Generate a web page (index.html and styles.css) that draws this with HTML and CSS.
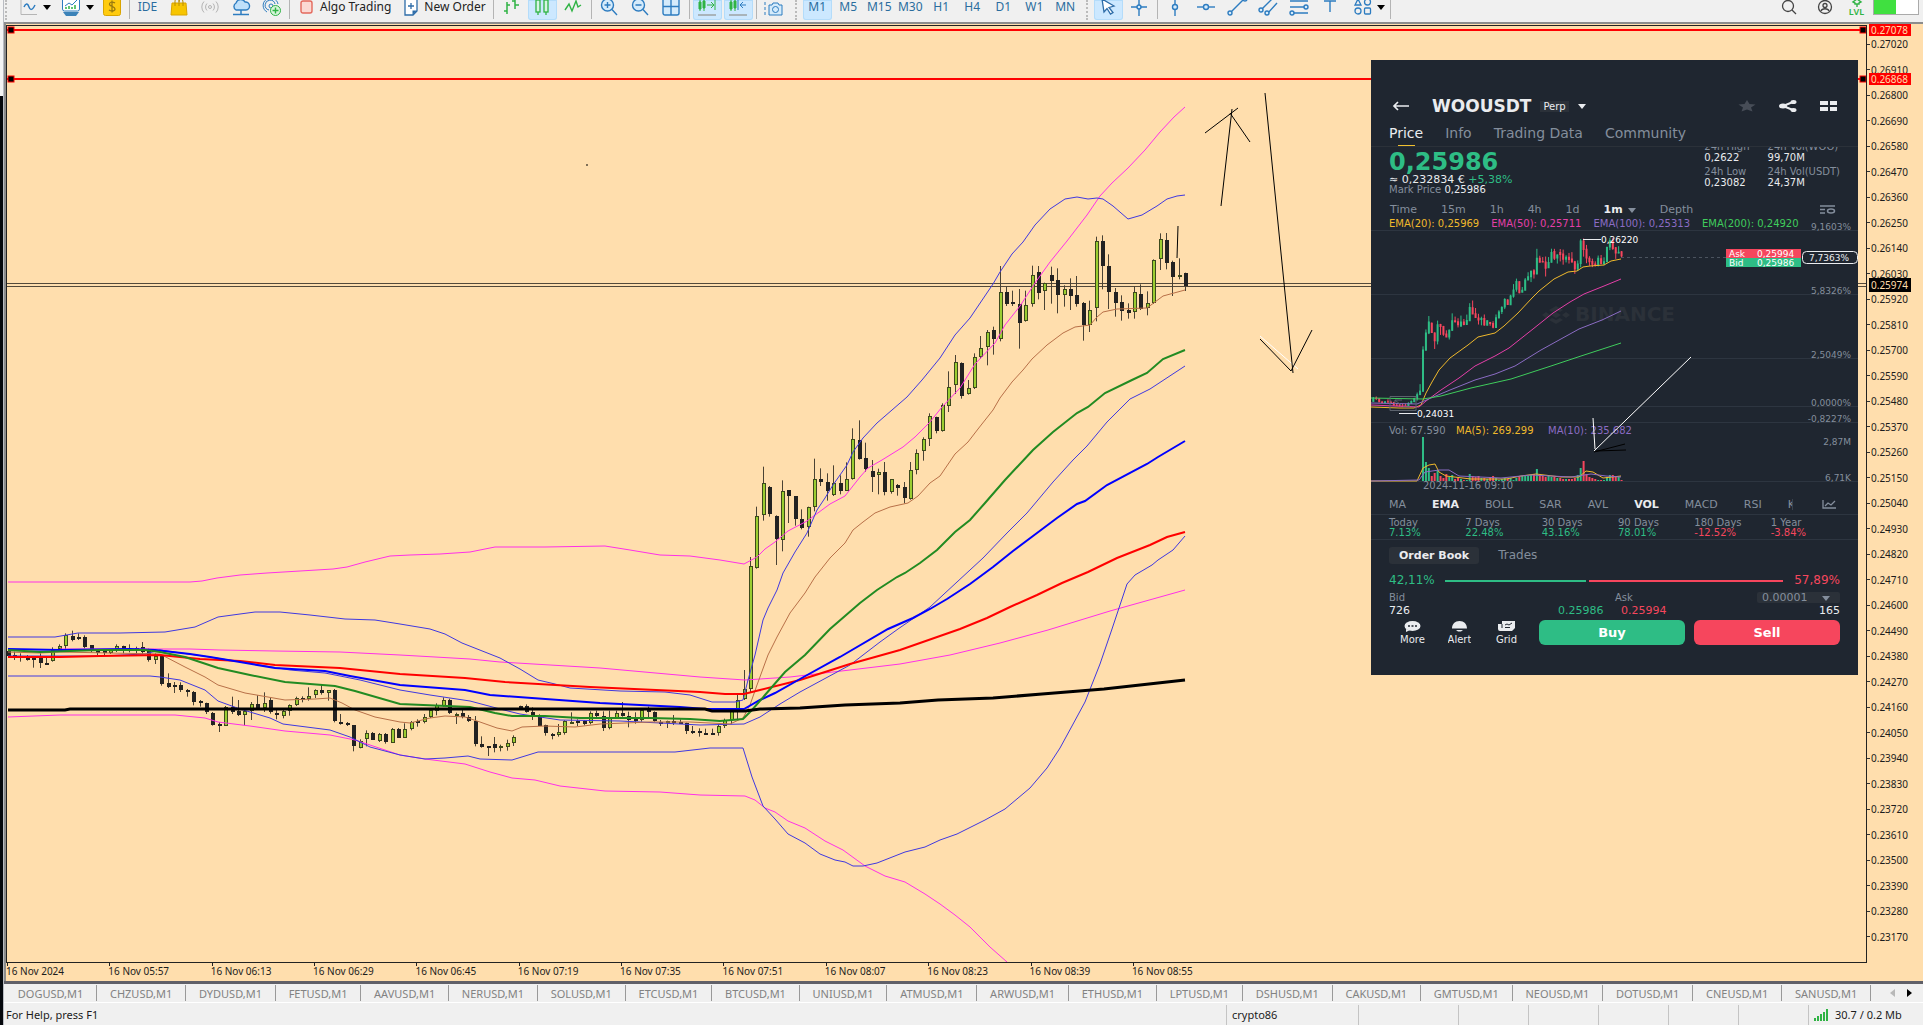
FILE: index.html
```html
<!DOCTYPE html>
<html lang="en">
<head>
<meta charset="utf-8">
<title>WOOUSD,M1</title>
<link rel="stylesheet" href="styles.css">
</head>
<body>
<div class="edge"></div>
<div class="app">
  <header class="toolbar">
    <span class="grip"></span>
    <button class="combo" aria-label="Line studies"><svg width="18" height="18" viewBox="0 0 18 18"><path d="M1 1v15.500h16" stroke="#b5b5b5"/><path d="M4 9c2-5 4-3 5 0s3 4 6-2" stroke="#2d7cc0" stroke-width="1.500"/></svg><i class="caret"></i></button>
    <button class="combo" aria-label="Indicators"><svg width="20" height="20" viewBox="0 0 20 20"><rect x="1.500" y="-2" width="17" height="16" rx="2" fill="#fff" stroke="#2d7cc0"/><path d="M4 9l4-3 3 2 5-5" stroke="#2d7cc0"/><path d="M5 12v-2M8 12V9M11 12v-2M14 12V8" stroke="#2fb344" stroke-width="1.500"/><path d="M2 15h16l-3 4H5z" fill="#3b82b8"/></svg><i class="caret"></i></button>
    <button class="tool" aria-label="Symbols"><svg width="18" height="20" viewBox="0 0 18 20"><rect x=".5" y=".5" width="17" height="18" rx="2" fill="#ffcb0f" stroke="#d9a400"/><path d="M12 6C9 4 6 5.500 6.500 7.500S12 9.500 12 12s-4 2.500-6 1M9 3.500v12" stroke="#9a7a10" stroke-width="1.300"/></svg></button>
    <span class="sep"></span>
    <button class="tool">IDE</button>
    <button class="tool" aria-label="Market"><svg width="18" height="20" viewBox="0 0 18 20"><path d="M2 6h14l1 12H1z" fill="#f7c500" stroke="#d9a400"/><path d="M5 9V4a2 3 0 0 1 4 0v5M9 5a2 3 0 0 1 4 0v4" stroke="#b98d00"/></svg></button>
    <button class="tool" aria-label="Signals"><svg width="18" height="18" viewBox="0 0 18 18" stroke="#b4b4b4"><circle cx="9" cy="9" r="1.500"/><path d="M6 5.500a5 5 0 0 0 0 7M12 5.500a5 5 0 0 1 0 7M3 3.500a8 8 0 0 0 0 11M15 3.500a8 8 0 0 1 0 11"/></svg></button>
    <button class="tool" aria-label="Cloud"><svg width="20" height="20" viewBox="0 0 20 20"><path d="M5 13a4 4 0 0 1 0-7 5 5 0 0 1 9-1 4 4 0 0 1 1 8z" fill="#bfe0fa" stroke="#2d7cc0" stroke-width="1.400"/><path d="M10 13v4M2 17.500h16" stroke="#2d7cc0" stroke-width="1.500"/></svg></button>
    <button class="tool" aria-label="VPS"><svg width="20" height="20" viewBox="0 0 20 20" stroke="#2d7cc0"><path d="M5 15A7.500 7.500 0 1 1 16 7M7 13a5 5 0 1 1 6-6"/><circle cx="9" cy="9" r="2"/><circle cx="13.500" cy="13.500" r="5" fill="#d9f5dc" stroke="#2fb344"/><path d="M13.500 10.500v6M10.500 13.500h6" stroke="#2fb344" stroke-width="1.400"/></svg></button>
    <span class="sep"></span>
    <button class="label-tool"><svg width="13" height="14" viewBox="0 0 13 14"><rect x="1" y="1" width="11" height="12" rx="2" fill="#fbd9d4" stroke="#e3685c" stroke-width="1.400"/></svg>Algo Trading</button>
    <button class="label-tool"><svg width="14" height="18" viewBox="0 0 14 18"><path d="M1 1h12v12l-4 4H1z" fill="#fff" stroke="#2d6ca8" stroke-width="1.300"/><path d="M13 12.500L8.500 17v-4.500z" fill="#2d6ca8"/><path d="M7 5v6M4 8h6" stroke="#2d6ca8" stroke-width="1.300"/></svg>New Order</button>
    <span class="sep"></span>
    <button class="tool" aria-label="Bar chart"><svg width="18" height="18" viewBox="0 0 18 18" stroke="#2fb344" stroke-width="1.500"><path d="M5 4v12M2 13h3M5 7h3M13 0v11M10 3h3M13 7h4"/></svg></button>
    <button class="tool on" aria-label="Candlesticks"><svg width="18" height="18" viewBox="0 0 18 18" stroke="#2fb344" stroke-width="1.300"><path d="M5 0v17M13 0v17"/><rect x="3" y="2" width="4" height="12" fill="#d6f4e4"/><rect x="11" y="2" width="4" height="12" fill="#d6f4e4"/></svg></button>
    <button class="tool" aria-label="Line chart"><svg width="18" height="18" viewBox="0 0 18 18" stroke="#2fb344" stroke-width="1.400"><path d="M1 12l4-6 3 7 4-10 2 6 3-2"/></svg></button>
    <span class="sep"></span>
    <button class="tool" aria-label="Zoom in"><svg width="18" height="18" viewBox="0 0 18 18" stroke="#2d7cc0" stroke-width="1.400"><circle cx="7.500" cy="7" r="6" fill="#d5ebfb"/><path d="M12 11.500l5 5.500M4.500 7h6M7.500 4v6"/></svg></button>
    <button class="tool" aria-label="Zoom out"><svg width="18" height="18" viewBox="0 0 18 18" stroke="#2d7cc0" stroke-width="1.400"><circle cx="7.500" cy="7" r="6" fill="#d5ebfb"/><path d="M12 11.500l5 5.500M4.500 7h6"/></svg></button>
    <button class="tool" aria-label="Tile windows"><svg width="18" height="18" viewBox="0 0 18 18" stroke="#2d7cc0" stroke-width="1.400"><rect x="1" y="0" width="16" height="17" rx="2" fill="#d5ebfb"/><path d="M9 0v17M1 8.500h16"/></svg></button>
    <span class="sep"></span>
    <button class="tool on" aria-label="Auto scroll"><svg width="20" height="20" viewBox="0 0 20 20" stroke="#2fb344"><path d="M3 3v11M7 2v12M18 2v11M10 8h7M14 5l3 3-3 3"/><path d="M2 5h2v7H2zM6 4h2v7H6z" fill="#2fb344"/><path d="M1 18h18" stroke="#a9b4ba" stroke-width="2"/></svg></button>
    <button class="tool on" aria-label="Chart shift"><svg width="20" height="20" viewBox="0 0 20 20" stroke="#2fb344"><path d="M3 3v11M7 2v12"/><path d="M2 5h2v7H2zM6 4h2v7H6z" fill="#2fb344"/><path d="M10 2v11M18 8h-6M15 5l-3 3 3 3" stroke="#2d7cc0"/><path d="M1 18h18" stroke="#a9b4ba" stroke-width="2"/></svg></button>
    <span class="sep"></span>
    <button class="tool" aria-label="Screenshot"><svg width="20" height="20" viewBox="0 0 20 20" stroke="#2d7cc0"><path d="M1 18V2h17" stroke-dasharray="3 2"/><path d="M5 8h3l1-2h5l1 2h3v10H5z" fill="#d5ebfb"/><circle cx="11.500" cy="12.500" r="3"/></svg></button>
    <span class="grip wide"></span>
    <button class="tool on">M1</button><button class="tool">M5</button><button class="tool">M15</button><button class="tool">M30</button><button class="tool">H1</button><button class="tool">H4</button><button class="tool">D1</button><button class="tool">W1</button><button class="tool">MN</button>
    <span class="grip wide"></span>
    <button class="tool on" aria-label="Cursor"><svg width="16" height="18" viewBox="0 0 16 18" stroke="#2d6ca8" stroke-width="1.300"><path d="M2 1l12 7-5 1.500 4 5-2.500 1.500-3.500-5.500L4 14z" fill="#fff"/></svg></button>
    <button class="tool" aria-label="Crosshair"><svg width="18" height="18" viewBox="0 0 18 18" stroke="#2d7cc0" stroke-width="1.400"><path d="M9 0v18M1 9h16"/><circle cx="9" cy="9" r="2" fill="#d5ebfb"/></svg></button>
    <span class="sep"></span>
    <button class="tool" aria-label="Vertical line"><svg width="18" height="18" viewBox="0 0 18 18" stroke="#2d7cc0" stroke-width="1.400"><path d="M9 0v18"/><circle cx="9" cy="9" r="2.500" fill="#d5ebfb"/></svg></button>
    <button class="tool" aria-label="Horizontal line"><svg width="18" height="18" viewBox="0 0 18 18" stroke="#2d7cc0" stroke-width="1.400"><path d="M0 9h18"/><circle cx="9" cy="9" r="2.500" fill="#d5ebfb"/></svg></button>
    <button class="tool" aria-label="Trend line"><svg width="20" height="18" viewBox="0 0 20 18" stroke="#2d7cc0" stroke-width="1.400"><path d="M4 14L17 1"/><circle cx="3" cy="15" r="2" fill="#d5ebfb"/><circle cx="18" cy="1" r="2" fill="#d5ebfb"/></svg></button>
    <button class="tool" aria-label="Channel"><svg width="20" height="18" viewBox="0 0 20 18" stroke="#2d7cc0" stroke-width="1.400"><path d="M4 11L14 1M10 15L19 5"/><circle cx="3" cy="12" r="2" fill="#d5ebfb"/><circle cx="9" cy="15" r="2" fill="#d5ebfb"/></svg></button>
    <button class="tool" aria-label="Fibonacci"><svg width="20" height="18" viewBox="0 0 20 18" stroke="#2d7cc0" stroke-width="1.400"><path d="M1 3h18M1 9h15M4 15h15"/><circle cx="17" cy="9" r="2" fill="#d5ebfb"/><circle cx="3" cy="15" r="2" fill="#d5ebfb"/></svg></button>
    <button class="tool" aria-label="Text"><svg width="18" height="18" viewBox="0 0 18 18" stroke="#2d7cc0" stroke-width="1.400"><path d="M3 3h12M9 3v11"/></svg></button>
    <button class="combo" aria-label="Shapes"><svg width="18" height="18" viewBox="0 0 18 18" stroke="#2d7cc0" stroke-width="1.300" fill="#d5ebfb"><path d="M4 1l3 6H1z"/><circle cx="13.500" cy="4" r="3"/><circle cx="4" cy="13" r="3"/><rect x="10.500" y="10" width="6" height="6" rx="1"/></svg><i class="caret"></i></button>
    <span class="sep"></span>
    <div class="right-tools">
      <button class="tool" aria-label="Search"><svg width="16" height="16" viewBox="0 0 16 16" stroke="#444" stroke-width="1.300"><circle cx="7" cy="7" r="5.500"/><path d="M11 11l4 4"/></svg></button>
      <button class="tool" aria-label="Account"><svg width="16" height="16" viewBox="0 0 16 16" stroke="#444" stroke-width="1.300"><circle cx="8" cy="8" r="6.500"/><circle cx="8" cy="6.500" r="2"/><path d="M4 12c1-3 7-3 8 0"/></svg></button>
      <button class="lvl"><svg width="10" height="8" viewBox="0 0 10 8"><path d="M5 0l4 3-2 1v1H3V4L1 3zM5 5v3" stroke="#2fb344" stroke-width="1.400"/></svg>LVL</button>
      <span class="battery"><i></i></span>
    </div>
  </header>

  <main class="frame">
    <div class="plot">
      <svg id="chart" viewBox="7 26 1859 936" preserveAspectRatio="none" aria-label="Price chart">
        <g class="price-lines"><path d="M7 283.500H1866M7 286.500H1866"/></g>
        <g id="bars"></g>
        <g class="thin magenta">
          <polyline points="8,582 190,582 202,581 217,578 240,575 267,573 300,571 333,569 347,567 365,562 390,556 410,555 440,554 470,552 495,547 545,547 605,546 630,550 660,555 690,556 720,560 744,564 757,557 765,549 775,542 788,531 807,521 830,504 845,496 860,477 868,468 882,460 903,447 915,437 930,422 942,407 960,388 975,364 995,343 1005,325 1020,306 1035,283 1050,262 1067,241 1087,215 1100,196 1112,183 1128,168 1145,150 1160,132 1174,117 1185,107"/>
          <polyline points="60,649 150,649 190,649 220,650 275,651 340,652 400,655 470,659 500,662 600,668 700,677 745,680 790,677 850,670 900,664 950,655 1000,643 1048,630 1110,611 1185,590"/>
          <polyline points="8,717 60,715 175,715 205,718 218,722 250,726 285,731 330,735 355,740 400,755 425,759 465,764 490,772 512,778 535,780 560,786 605,791 660,792 700,795 745,796 755,800 765,808 775,812 788,821 805,828 825,841 843,850 865,866 885,876 905,882 925,894 940,904 955,915 970,927 990,947 1007,962"/>
        </g>
        <g class="thin indigo">
          <polyline points="8,637 55,637 78,633 120,633 165,632 195,627 218,617 240,614 255,612 280,612 310,615 345,619 375,620 400,624 430,629 445,634 462,643 500,658 520,669 538,680 555,684 570,688 620,691 665,692 690,695 712,702 735,702 743,700 748,680 755,655 763,620 768,608 777,590 783,573 795,552 807,533 817,510 825,498 833,485 847,465 853,452 863,438 877,423 907,397 922,380 940,358 955,335 970,318 993,284 1000,272 1012,254 1023,242 1035,225 1050,209 1065,199 1077,197 1088,199 1097,198 1103,199 1113,206 1128,219 1142,215 1157,206 1167,199 1177,196 1185,195"/>
          <polyline points="8,656 100,656 145,654 160,650 210,657 260,665 290,670 325,673 345,677 360,680 400,690 430,695 470,701 500,709 520,714 560,720 620,721 700,725 744,724 760,717 780,704 800,692 850,665 880,642 898,629 930,607 957,582 983,558 1007,533 1027,513 1053,482 1073,460 1087,446 1107,422 1130,399 1150,389 1185,366"/>
          <polyline points="8,676 150,676 160,677 180,680 205,690 218,701 240,709 270,718 283,724 330,730 350,737 370,747 400,755 425,759 445,758 468,756 480,759 512,760 538,752 580,752 675,752 710,748 743,748 752,777 763,806 775,819 788,834 805,843 820,854 835,860 845,862 853,866 863,866 877,863 905,852 925,847 940,840 957,834 985,820 1005,809 1030,788 1047,768 1060,748 1072,726 1085,702 1100,664 1112,629 1119,608 1127,584 1135,575 1152,565 1158,560 1173,550 1185,536"/>
        </g>
        <polyline class="thin sienna" points="8,652 40,653 60,652 160,654 185,667 205,677 218,685 245,693 285,700 315,699 330,698 342,703 355,710 375,717 400,722 410,723 430,718 445,716 465,717 480,722 497,728 512,731 522,727 545,726 575,727 600,724 650,722 690,722 730,724 743,718 750,705 757,685 768,655 777,637 790,613 805,593 815,577 830,558 845,543 853,530 863,522 875,513 890,507 908,503 918,496 930,483 940,476 955,454 968,442 978,429 993,410 1000,398 1012,382 1023,370 1032,359 1047,345 1063,333 1075,327 1090,325 1097,317 1103,312 1117,309 1147,308 1155,302 1163,296 1185,290"/>
        <polyline class="thick red" points="8,657 60,657 100,656 160,655 200,659 240,661 275,665 340,668 400,674 465,678 505,682 590,687 700,692 725,694 744,694 760,690 800,680 850,664 900,650 960,629 987,618 1010,607 1037,595 1062,583 1088,572 1117,558 1150,545 1167,537 1185,532"/>
        <polyline class="thick blue" points="8,649 60,650 130,649 155,650 190,654 210,657 240,662 275,668 325,671 350,676 400,685 465,690 490,695 600,703 680,707 705,709 744,709 760,700 775,693 800,679 840,657 888,629 913,618 930,609 947,599 970,584 993,567 1013,551 1037,533 1057,518 1077,504 1085,501 1107,485 1147,464 1158,457 1185,441"/>
        <polyline class="thick green" points="8,650 40,652 70,651 100,650 145,650 160,652 185,657 200,662 218,668 250,675 285,682 310,684 335,686 355,691 400,704 470,707 495,713 512,716 545,716 580,718 650,718 690,719 720,721 743,719 752,710 765,695 785,672 805,655 830,629 860,603 877,590 897,577 905,573 920,563 937,550 955,532 970,520 985,503 1005,480 1033,450 1053,432 1077,413 1088,407 1105,393 1132,380 1147,373 1163,359 1185,350"/>
        <polyline class="thick black" points="8,710 65,710 70,709 125,709 400,709 705,709 712,711 745,711 760,709 800,708 845,705 900,703 938,700 993,698 1042,694 1104,689 1185,680"/>
        <g class="levels">
          <path d="M7 30H1866M7 79H1866"/>
          <rect x="8" y="27" width="6" height="6"/><rect x="8" y="76" width="6" height="6"/><rect x="1860" y="27" width="6" height="6"/><rect x="1860" y="76" width="6" height="6"/>
        </g>
        <path class="sketch white" d="M1260 336L1298 369"/>
        <path class="sketch" d="M1221 206L1232 109M1205 133L1238 108M1230 113L1250 142M1265 93L1293 373M1260 339L1291 371L1312 330M1178 226L1177 258M586 165h2"/>
      </svg>

      <section class="phone">
        <div class="p-head">
          <svg width="18" height="10" viewBox="0 0 18 10"><path d="M17 5H2M6 1L2 5l4 4" stroke="#eaecef" stroke-width="1.700"/></svg>
          <h1>WOOUSDT</h1><span class="perp">Perp</span><i class="caret"></i>
          <div class="p-actions">
            <svg width="18" height="12" viewBox="0 0 18 12"><path d="M9 0l2.500 4 6 .5-4.500 3 1.500 4L9 9.500 3.500 11.500 5 7.500.5 4.500l6-.5z" fill="#474d57"/></svg>
            <svg width="18" height="12" viewBox="0 0 18 12"><path d="M14 2L4 6l10 4" stroke="#eaecef" stroke-width="2"/><g fill="#eaecef"><ellipse cx="14.500" cy="2" rx="3" ry="2"/><ellipse cx="4" cy="6" rx="4" ry="2.500"/><ellipse cx="14.500" cy="10" rx="3" ry="2"/></g></svg>
            <svg width="18" height="10" viewBox="0 0 18 10"><path d="M0 0h8v4H0zM10 0h7v4h-7zM0 6h8v4H0zM10 6h7v4h-7z" fill="#eaecef"/></svg>
          </div>
        </div>
        <nav class="p-tabs"><a href="#" class="cur">Price</a><a href="#">Info</a><a href="#">Trading Data</a><a href="#">Community</a></nav>
        <div class="p-stats">
          <div>
            <div class="big">0,25986</div>
            <div class="eur">≈ 0,232834 € <b>+5,38%</b></div>
            <div class="mark">Mark Price <b>0,25986</b></div>
          </div>
          <div class="day">
            <dl><dt>24h High</dt><dd>0,2622</dd><dt>24h Low</dt><dd>0,23082</dd></dl>
            <dl><dt>24h Vol(WOO)</dt><dd>99,70M</dd><dt>24h Vol(USDT)</dt><dd>24,37M</dd></dl>
          </div>
        </div>
        <nav class="p-frames"><a href="#">Time</a><a href="#">15m</a><a href="#">1h</a><a href="#">4h</a><a href="#">1d</a><a href="#" class="cur">1m<i class="caret"></i></a><a href="#">Depth</a><svg width="16" height="9" viewBox="0 0 16 9"><path d="M0 1h15M0 4.500h5M0 8h5" stroke="#848e9c" stroke-width="1.300"/><ellipse cx="11" cy="6" rx="3.500" ry="2" stroke="#848e9c" stroke-width="1.500"/></svg></nav>
        <div class="p-ema"><span class="c-y">EMA(20): 0,25969</span><span class="c-m">EMA(50): 0,25711</span><span class="c-p">EMA(100): 0,25313</span><span class="c-g">EMA(200): 0,24920</span></div>
        <svg class="p-chart" viewBox="0 170 487 261" aria-label="WOOUSDT chart">
          <path class="grid" d="M0 170.500H487M0 234.500H487M0 298.500H487M0 346.500H487M0 362.500H487M0 421.500H487"/>
          <g fill="#2b3139"><path d="M185 246l7 4-3 2-4-2-4 2-3-2zM185 264l7-4-3-2-4 2-4-2-3 2zM185 252l5 3-5 3-5-3zM175 252l4 3-4 3-4-3zM195 252l4 3-4 3-4-3z"/><text class="mark-text" x="204" y="261">BINANCE</text></g>
          <path class="dash" d="M250 197.500H355"/>
          <g id="pbars"></g>
          <g class="p-lines">
            <polyline stroke="#f0b92c" points="0,347 28,348 43,348 50,345 55,333 61,322 68,310 79,298 97,285 107,277 124,273 133,266 147,253 161,238 168,231 183,219 197,212 206,211 212,207 219,206 233,205 240,201 250,199"/>
            <polyline stroke="#e43fa8" points="0,345 48,347 55,341 70,330 88,318 104,306 124,296 138,288 162,269 182,253 199,242 213,234 233,226 250,219"/>
            <polyline stroke="#8b6cc4" points="0,343 46,344 60,338 79,330 104,320 124,314 144,306 170,290 208,269 231,260 250,251"/>
            <polyline stroke="#3fcc5c" points="0,338 52,339 70,336 100,328 140,319 180,306 210,296 250,283"/>
            <polyline stroke="#f0b92c" points="0,421 46,421 52,408 58,405 64,404 68,412 75,416 100,419 135,419 150,416 165,414 190,417 208,417 215,411 222,412 232,418 250,416"/>
            <polyline stroke="#8b6cc4" points="0,421 48,420 54,412 68,410 78,410 88,416 130,418 160,415 200,417 220,414 235,416 250,417"/>
            <path stroke="#eaecef" d="M212 179.500h18M28 353.500h18"/>
            <path stroke="#5b626c" d="M19 336.500h26v14H19zM24 340h7M24 340v4M24 340l6 5M39 347h-7"/>
          </g>
          <g class="p-text">
            <text x="230" y="183" fill="#fff">0,26220</text><text x="46" y="357" fill="#fff">0,24031</text>
            <g class="vol"><text x="18" y="374">Vol: 67.590</text><text x="85" y="374" fill="#f0b92c">MA(5): 269.299</text><text x="177" y="374" fill="#8b6cc4">MA(10): 235.682</text>
            <text x="52" y="429">2024-11-16 09:10</text></g>
            <g text-anchor="end"><text x="480" y="170">9,1603%</text><text x="480" y="234">5,8326%</text><text x="480" y="298">2,5049%</text><text x="480" y="346">0,0000%</text><text x="480" y="362">-0,8227%</text><text x="480" y="385">2,87M</text><text x="480" y="421">6,71K</text></g>
            <path d="M355 189h75v9h-75z" fill="#f6465d"/><path d="M355 198h75v9h-75z" fill="#2ebd85"/>
            <g fill="#fff"><text x="358" y="197">Ask</text><text x="358" y="206">Bid</text><text x="386" y="197">0,25994</text><text x="386" y="206">0,25986</text></g>
            <rect x="431.500" y="191.500" width="55" height="12" rx="4" fill="#1f2630" stroke="#eaecef"/>
            <text x="438" y="201" fill="#eaecef">7,7363%</text>
          </g>
          <path class="sketch" d="M223 392L254 384M225 391L255 390"/><path class="sketch white" d="M320 297L223 391M222 358L224 389"/>
        </svg>
        <nav class="p-inds"><a href="#">MA</a><a href="#" class="cur">EMA</a><a href="#">BOLL</a><a href="#">SAR</a><a href="#">AVL</a><a href="#" class="cur">VOL</a><a href="#">MACD</a><a href="#">RSI</a><a href="#" class="cut">K</a><svg width="14" height="9" viewBox="0 0 14 9"><path d="M1 0v8h13M3 6l3-3 3 2 4-4" stroke="#848e9c" stroke-width="1.300"/></svg></nav>
        <dl class="p-perf">
          <div><dt>Today</dt><dd>7.13%</dd></div><div><dt>7 Days</dt><dd>22.48%</dd></div><div><dt>30 Days</dt><dd>43.16%</dd></div><div><dt>90 Days</dt><dd>78.01%</dd></div><div><dt>180 Days</dt><dd class="down">-12.52%</dd></div><div><dt>1 Year</dt><dd class="down">-3.84%</dd></div>
        </dl>
        <div class="p-book"><button class="cur">Order Book</button><button>Trades</button></div>
        <div class="p-ratio"><span class="up">42,11%</span><i class="bid" style="flex-grow:42"></i><i class="ask" style="flex-grow:58"></i><span class="down">57,89%</span></div>
        <div class="p-cols"><span>Bid</span><span>Ask</span><button class="tick">0.00001<i class="caret"></i></button></div>
        <div class="p-depth"><span>726</span><span class="up">0.25986</span><span class="down">0.25994</span><span>165</span></div>
        <div class="p-foot">
          <button class="nav"><svg width="17" height="11" viewBox="0 0 17 11"><ellipse cx="8.500" cy="5" rx="8" ry="5" fill="#eaecef"/><path d="M2 8v3l4-2z" fill="#eaecef"/><path d="M4 5h2M7.500 5h2M11 5h2" stroke="#1f2630" stroke-width="1.500"/></svg><span>More</span></button>
          <button class="nav"><svg width="17" height="11" viewBox="0 0 17 11"><path d="M1 7.500C1 3 4 0 8.500 0S16 3 16 7.500zM5 9h7l-2 1.500H7z" fill="#eaecef"/></svg><span>Alert</span></button>
          <button class="nav"><svg width="17" height="11" viewBox="0 0 17 11"><path d="M4 0h13v7l-3 3H2a2 2 0 0 1-2-2V3h4z" fill="#eaecef"/><path d="M4 3v4M7 4l2-1 2 1 3-2M7 6.500h5" stroke="#1f2630"/></svg><span>Grid</span></button>
          <button class="trade buy">Buy</button><button class="trade sell">Sell</button>
        </div>
      </section>
    </div>

    <div class="axis">
      <ul class="prices" id="prices"></ul>
      <span class="tag t1">0.27078</span><span class="tag t2">0.26868</span><span class="tag now">0.25974</span>
    </div>
    <ul class="times"><li>16 Nov 2024</li><li>16 Nov 05:57</li><li>16 Nov 06:13</li><li>16 Nov 06:29</li><li>16 Nov 06:45</li><li>16 Nov 07:19</li><li>16 Nov 07:35</li><li>16 Nov 07:51</li><li>16 Nov 08:07</li><li>16 Nov 08:23</li><li>16 Nov 08:39</li><li>16 Nov 08:55</li></ul>
  </main>

  <nav class="tabs">
    <a href="#">DOGUSD,M1</a><a href="#">CHZUSD,M1</a><a href="#">DYDUSD,M1</a><a href="#">FETUSD,M1</a><a href="#">AAVUSD,M1</a><a href="#">NERUSD,M1</a><a href="#">SOLUSD,M1</a><a href="#">ETCUSD,M1</a><a href="#">BTCUSD,M1</a><a href="#">UNIUSD,M1</a><a href="#">ATMUSD,M1</a><a href="#">ARWUSD,M1</a><a href="#">ETHUSD,M1</a><a href="#">LPTUSD,M1</a><a href="#">DSHUSD,M1</a><a href="#">CAKUSD,M1</a><a href="#">GMTUSD,M1</a><a href="#">NEOUSD,M1</a><a href="#">DOTUSD,M1</a><a href="#">CNEUSD,M1</a><a href="#">SANUSD,M1</a>
    <div class="arrows"><button aria-label="Previous"><svg width="5" height="8" viewBox="0 0 5 8"><path d="M5 0v8L0 4z" fill="#b8b8b8"/></svg></button><button aria-label="Next"><svg width="5" height="8" viewBox="0 0 5 8"><path d="M0 0v8l5-4z" fill="#000"/></svg></button></div>
  </nav>
  <footer class="status">
    <span class="help">For Help, press F1</span><span class="profile">crypto86</span><span class="c100"></span><span></span><span></span><span></span><span></span><span></span>
    <span class="net"><svg width="15" height="12" viewBox="0 0 15 12"><path d="M1 12V9M4 12V7M7 12V5M10 12V3M13 12V0" stroke="#2fb344" stroke-width="2"/></svg>30.7 / 0.2 Mb</span>
  </footer>
</div>
<script src="chart.js"></script>
</body>
</html>
```
FILE: styles.css
```css
* { box-sizing: border-box; }
body { margin: 0; height: 100vh; display: flex; overflow: hidden; background: #f0f0f0; color: #1c1c1c; font: 11px/14px "Noto Sans", sans-serif; }
button { border: 0; padding: 0; background: none; color: inherit; font: inherit; }
a { color: inherit; text-decoration: none; }
ul, dl, dd, h1 { margin: 0; padding: 0; list-style: none; }
svg { fill: none; flex: none; overflow: visible; }
.edge { width: 4px; flex: none; border-right: 1px solid #b9bcc2; background: linear-gradient(#f4f4f4 96px, #05080d 96px); }
.app { flex: 1; min-width: 0; display: flex; flex-direction: column; }
.caret { display: inline-block; width: 0; height: 0; border: 4px solid transparent; border-top: 5px solid currentColor; border-bottom: 0; }

.toolbar { height: 24px; flex: none; display: flex; align-items: flex-start; border-bottom: 2px solid #8c8c8c; padding-left: 1px; color: #2a6d9e; font-size: 12px; }
.toolbar button { height: 20px; display: flex; align-items: center; justify-content: center; padding-bottom: 7px; flex: none; }
.tool { width: 29px; margin: 0 1px; }
.tool.on { background: #cce8ff; border-radius: 0 0 3px 3px; box-shadow: inset 0 0 0 1px #b4dcfa; }
.combo { width: 42px; gap: 5px; padding-left: 5px; }
.combo .caret { color: #000; margin-top: 2px; }
.toolbar .label-tool { gap: 7px; padding: 0 7px 7px 8px; color: #222; }
.toolbar .label-tool + .label-tool { padding: 0 5px 7px 6px; gap: 6px; }
.sep { width: 1px; height: 19px; margin: 0 2px; background: #b4b4b4; flex: none; }
.grip { width: 2px; height: 20px; margin-right: 5px; border-left: 2px dotted #bbb; flex: none; }
.grip.wide { margin: 0 5px; }
.right-tools { margin-left: auto; display: flex; align-items: flex-start; gap: 5px; padding-right: 4px; }
.toolbar .lvl { width: 23px; flex-direction: column; font-size: 9px; line-height: 9px; font-weight: 600; color: #2fb344; padding-bottom: 6px; }
.battery { width: 46px; height: 15px; border: 1px solid #aaa; border-top: 0; background: #fff; display: flex; }
.battery i { width: 50%; background: #40e040; }

.frame { flex: 1; min-height: 0; background: #ffdead; border-left: 2px solid #8c8c8c; padding-top: 1px; display: grid; grid-template: minmax(0, 1fr) 18px / minmax(0, 1fr) 56px; }
.plot { position: relative; border: 1px solid #222; min-width: 0; }
#chart { display: block; width: 100%; height: 100%; overflow: hidden; }
.axis { position: relative; }
.prices { height: 100%; display: flex; flex-direction: column; justify-content: space-between; padding: 14px 0 21px; font-size: 10px; line-height: 10px; }
.prices li { display: flex; align-items: center; gap: 1px; }
.prices li::before { content: ""; width: 3px; height: 1px; background: #333; }
.tag { position: absolute; left: 2px; width: 42px; height: 12px; padding-left: 2px; background: #f00; color: #ffdead; font-size: 10px; line-height: 12px; }
.t1 { top: -1px; }
.t2 { top: 48px; }
.now { top: 253px; height: 14px; line-height: 15px; background: #000; }
.times { width: 66%; display: grid; grid-template-columns: repeat(12, 1fr); font-size: 10px; line-height: 14px; }
.times li { white-space: nowrap; position: relative; padding-top: 1px; }
.times li::before { content: ""; position: absolute; left: 1px; top: 0; width: 1px; height: 3px; background: #222; }

.tabs { flex: none; display: flex; height: 22px; border-top: 3px solid #606068; box-shadow: inset 0 -1px #fff; color: #828282; background: #f0f0f0; padding: 0 0 1px 1px; }
.tabs a { flex: 1 1 auto; text-align: center; border-right: 1px solid #999; margin: 1px 0; line-height: 17px; }
.arrows { width: 52px; display: flex; justify-content: space-evenly; align-items: center; padding-left: 8px; }
.arrows button { display: flex; }
.status { flex: none; height: 22px; display: flex; line-height: 20px; padding: 2px 0 0; }
.status span { width: 70px; border-left: 1px solid #c4c4c4; padding-left: 5px; }
.status .help { flex: 1; border: 0; padding-left: 2px; }
.status .profile { width: 132px; }
.status .c100 { width: 100px; }
.status .net { width: 115px; display: flex; align-items: center; gap: 6px; }

.thin, .thick, .sketch, .levels, .price-lines { fill: none; }
.thin { stroke-width: 1; }
.thick { stroke-width: 2; }
.magenta { stroke: #ff30e8; }
.indigo { stroke: #4038e0; }
.sienna { stroke: #b87048; }
.red { stroke: #f00; }
.blue { stroke: #00f; }
.green { stroke: #228b22; }
.black { stroke: #000; stroke-width: 3; }
.levels { stroke: #f00; stroke-width: 2; }
.levels rect { fill: #000; stroke-width: 1; }
.price-lines { stroke: #54493a; }
.sketch { stroke: #000; }
.sketch.white { stroke: #fff; }
.bull { fill: #9acd32; stroke: #3c4a1c; }
.bear { fill: #222; stroke: #222; }
.wick { stroke: #4a4234; }

.phone { position: absolute; top: 34px; right: 8px; width: 487px; height: 615px; padding-top: 31px; background: #1f2630; color: #848e9c; font: 10px/11px "DejaVu Sans", sans-serif; display: flex; flex-direction: column; }
.phone .cur { color: #eaecef; font-weight: bold; }
.up, .p-perf dd { color: #2ebd85; }
.down, .p-perf .down { color: #f6465d; }
.p-head { height: 30px; display: flex; align-items: center; padding: 0 20px 0 21px; }
.p-head h1 { font-size: 17px; line-height: 20px; color: #eaecef; margin: 0 9px 0 22px; }
.perp { background: #2b3139; padding: 0 3px; color: #eaecef; }
.p-head .caret { color: #eaecef; margin-left: 9px; }
.p-actions { margin-left: auto; display: flex; align-items: center; gap: 23px; }
.p-tabs { height: 26px; display: flex; gap: 22px; padding: 0 18px; font-size: 14px; line-height: 25px; border-bottom: 1px solid #2b3139; }
.p-tabs .cur { font-weight: normal; background: linear-gradient(#f0c030, #f0c030) center bottom / 17px 1px no-repeat; }
.p-stats { height: 53px; display: flex; justify-content: space-between; padding: 3px 18px 0; }
.big { color: #2ebd85; font-size: 24px; line-height: 24px; font-weight: bold; }
.eur { color: #eaecef; font-size: 11px; line-height: 11px; }
.eur b { color: #2ebd85; font-weight: normal; }
.mark { line-height: 10px; }
.mark b { color: #eaecef; font-weight: normal; }
.day { display: flex; gap: 18px; overflow: hidden; margin-top: -3px; color: #848e9c; }
.day dl { margin-top: -6px; }
.day dd { color: #eaecef; margin-bottom: 3px; }
.p-frames { height: 18px; display: flex; align-items: center; gap: 24px; padding: 0 22px 0 19px; font-size: 11px; }
.p-frames .caret { color: #848e9c; margin-left: 5px; }
.p-frames svg { margin-left: auto; }
.p-ema { height: 12px; display: flex; gap: 12px; padding: 0 18px; white-space: nowrap; }
.c-y { color: #f0b92c; }
.c-m { color: #e43fa8; }
.c-p { color: #8b6cc4; }
.c-g { color: #3fcc5c; }
.p-chart { width: 100%; display: block; }
.grid { stroke: #2d3540; }
.dash { stroke: #4b535e; stroke-dasharray: 3 3; }
.p-lines polyline, .p-lines path { stroke-width: 1; fill: none; }
.p-text { font-size: 9px; fill: #848e9c; }
.vol { font-size: 10px; }
.mark-text { font-size: 20px; font-weight: bold; }
.p-inds { height: 24px; display: flex; align-items: center; gap: 26px; padding: 4px 22px 0 18px; font-size: 11px; border-bottom: 1px solid #2d3540; }
.p-inds svg { margin-left: auto; }
.p-inds .cut { width: 5px; overflow: hidden; border-right: 1px solid #3a424d; }
.p-perf { height: 25px; display: grid; grid-template-columns: repeat(6, 1fr); padding: 3px 11px 0 18px; border-bottom: 1px solid #2d3540; line-height: 10px; }
.p-book { display: flex; gap: 9px; padding: 7px 18px 8px; }
.p-book button { height: 17px; border-radius: 3px; padding: 0 10px; font-size: 12px; line-height: 17px; }
.p-book .cur { background: #2b3139; font-size: 11px; }
.p-ratio { display: flex; align-items: center; height: 17px; padding: 0 18px; font-size: 12px; gap: 3px; }
.p-ratio i { flex-basis: 0; height: 2px; background: #2ebd85; margin-left: 7px; }
.p-ratio .ask { background: #f6465d; margin: 0 8px 0 0; }
.p-cols { display: grid; grid-template-columns: 1fr 142px 83px; align-items: center; padding: 2px 18px 0; height: 15px; }
.tick { background: #2b3139; border-radius: 2px; text-align: left; padding-left: 5px; font-size: 11px; line-height: 11px; }
.tick .caret { margin-left: 14px; }
.p-depth { display: grid; grid-template-columns: 169px 63px 1fr auto; height: 10px; overflow: hidden; padding: 0 18px; font-size: 11px; line-height: 13px; color: #eaecef; }
.p-foot { display: flex; align-items: flex-start; padding: 6px 18px 0; color: #eaecef; }
.nav { width: 47px; display: flex; flex-direction: column; align-items: center; gap: 2px; padding-top: 1px; }
.nav span { height: 9px; overflow: hidden; }
.trade { flex: 1; height: 25px; border-radius: 6px; font-size: 13px; font-weight: bold; color: #fff; }
.buy { background: #2ebd85; margin-left: 9px; }
.sell { background: #f6465d; margin-left: 9px; }
```
FILE: chart.js
```js
// Candles in blocks: y values are thirds of a unit below the block's base,
// each as [high, low, body top, body bottom, rising].
const blocks = [
  { base: 600, bars: [
    [150,172,152,168,0],[155,180,166,169,0],[160,185,169,176,0],[165,182,174,178,0],[168,203,175,180,0],[160,204,173,188,0],[170,192,188,191,0],[142,185,150,183,1],[133,155,139,149,1],[100,150,106,139,1],
    [92,124,107,120,0],[100,120,111,114,0],[106,145,111,142,0],[135,156,136,152,0],[150,165,152,158,0],[150,165,153,157,0],[147,162,150,160,1],[133,156,138,147,1],[137,160,139,147,0],[133,157,146,149,0],
    [140,163,143,147,0],[126,162,141,157,0],[146,185,151,182,0],[160,192,169,182,1],[165,257,168,252,0],[220,264,249,260,0],[246,279,255,259,0],[247,276,255,271,0],[267,290,271,275,0],[273,316,275,304,0],
    [300,320,304,310,0],[308,342,310,338,0],[336,377,338,374,0],[366,396,373,379,0],[318,378,320,376,1],[290,342,320,334,0],[300,348,334,347,0],[328,376,334,346,1],[306,360,311,331,1],[286,328,312,326,0],
    [277,336,310,326,1],[294,341,301,338,0],[330,358,340,346,0],[330,355,334,349,1],[313,347,316,333,1],[290,318,295,316,1],[289,307,294,301,0],[262,302,288,298,1],[268,294,271,287,1],[254,284,270,278,0],
    [270,302,271,280,1],[267,367,270,364,0],[342,374,366,372,0],[366,378,368,374,0],[375,454,376,440,0],[418,445,422,442,1],[391,439,400,419,1],[396,420,399,420,0],[399,426,401,423,1],[399,431,401,426,0],
    [384,428,386,427,1],[384,414,386,413,0]] },
  { base: 440, bars: [
    [850,893,866,892,1],[843,871,845,866,1],[838,860,843,846,0],[822,850,832,846,1],[808,834,811,832,1],[790,826,796,814,1],[772,800,781,798,1],[776,822,781,820,0],[818,852,821,825,1],[806,835,820,832,0],
    [825,846,832,845,0],[828,919,844,914,0],[889,923,912,920,0],[918,948,919,921,0],[891,937,912,924,0],[914,934,918,924,1],[899,932,909,920,1],[886,918,892,910,1],[797,802,798,801,0],[793,818,798,815,0],
    [802,840,817,831,0],[823,858,825,857,0],[854,887,856,881,0],[879,898,881,886,0],[852,890,877,887,1],[841,884,843,878,1],[817,851,845,850,1],[838,858,843,846,0],[840,856,844,852,0],[814,853,820,850,1],
    [812,834,820,830,0],[814,873,829,866,0],[812,868,835,866,1],[812,837,820,835,1],[786,830,818,828,0],[815,862,828,840,0],[817,851,838,841,0],[806,845,810,840,1],[800,832,810,815,0],[814,845,816,844,0],
    [840,858,846,851,0],[842,864,844,850,1],[825,855,843,846,0],[838,852,847,850,0],[848,882,850,874,0],[858,882,873,876,0],[865,890,873,876,0],[866,882,879,881,0],[866,882,878,881,0],[852,887,858,880,1],
    [836,864,840,858,1],[812,852,814,842,1],[765,838,780,816,1],[690,780,748,779,1],[351,756,379,748,1],[200,386,227,383,1],[80,242,130,227,1],[138,230,141,223,0],[226,375,227,297,0],[121,334,153,299,1],
    [150,249,151,170,0],[168,257,169,239,0],[208,268,237,264,0],[200,290,202,263,1],[56,214,118,202,1],[85,138,118,126,0],[100,182,126,153,0],[76,168,129,166,1],[106,163,129,152,0],[67,152,116,152,1]] },
  { base: 380, bars: [
    [145,299,178,297,1],[121,239,181,238,0],[188,275,234,268,0],[240,336,273,290,0],[266,343,277,287,1],[246,346,277,336,0],[297,341,298,338,1],[312,347,314,323,0],[306,370,322,356,0],[246,359,271,358,1],
    [208,283,219,271,1],[172,242,178,215,1],[100,198,107,175,1],[110,160,112,153,0],[70,155,76,154,1]] },
  { base: 90, bars: [
    [844,966,892,949,1],[795,912,817,886,1],[817,926,819,917,0],[870,914,895,913,1],[790,897,802,895,1],[738,806,774,802,1],[720,826,727,773,1],[710,794,720,748,0],[528,754,607,748,1],[590,648,607,644,0],
    [602,648,636,641,0],[597,776,641,697,0],[602,695,646,694,1],[527,650,556,643,1],[528,628,547,609,0],[578,660,580,605,1],[530,641,556,575,0],[535,670,571,616,0],[586,650,598,616,1],[565,660,598,619,0],
    [558,650,615,641,0],[636,752,640,705,0],[632,726,660,704,1],[440,694,454,656,1],[436,598,453,529,0],[493,657,528,605,0],[594,680,607,640,0],[616,692,636,662,0],[640,686,660,670,0],[588,686,607,668,1],
    [583,660,612,658,0],[604,676,640,654,1],[508,642,511,640,1],[430,540,448,508,1],[429,538,451,520,0],[512,618,515,560,0],[505,568,555,560,1],[548,603,550,588,0]] }
];
const bars = blocks.flatMap(b => b.bars.map(v => [...v.slice(0, 4).map(y => b.base + y / 3), v[4]]));

document.getElementById('bars').innerHTML = bars.map(([h, l, t, b, up], i) => {
  const x = Math.floor(8 + 6.4 * i) + 0.5;
  const top = Math.round(t) + 0.5, height = Math.max(1, Math.round(b - t) - 1);
  return `<path class="wick" d="M${x} ${h}V${l}"/><rect class="${up ? 'bull' : 'bear'}" x="${x - 1}" y="${top}" width="3" height="${height}"/>`;
}).join('');

// The same bars at the phone's scale, with their volumes.
const volumes = [44,19,13,5,8,11,5,3,7,4,6,2,3,2,1,1,7,5,4,5,3,3,2,4,5,3,1,2,3,2,3,1,3,4,5,6,5,6,7,12,6,5,4,5,4,4,3,3,2,2,2,2,3,6,13,20,7,4,3,2,1,1,1,4,6,6,4,4,1];
const scale = y => 179 + (y - 236.7) * 0.335;
document.getElementById('pbars').innerHTML = bars.map(([h, l, t, b, up], i) => {
  if (i < 99) return '';
  const x = 52 + (i - 116) * 2.92, c = up ? '#2ebd85' : '#f6465d', v = volumes[i - 116] || 0;
  return `<path stroke="${c}" stroke-width="1" d="M${x} ${scale(h)}V${scale(l)}"/><path stroke="${c}" stroke-width="2" d="M${x} ${scale(t)}V${scale(b) + 1}M${x} 421V${421 - v}"/>`;
}).join('');

document.getElementById('prices').innerHTML =
  Array.from({ length: 36 }, (_, i) => `<li>${(0.2702 - i * 0.0011).toFixed(5)}</li>`).join('');
```
